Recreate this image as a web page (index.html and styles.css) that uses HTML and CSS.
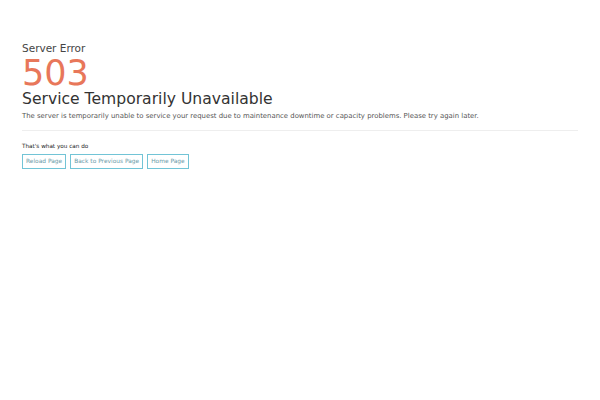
FILE: index.html
```html
<!DOCTYPE html>
<html>
<head>
<meta charset="utf-8">
<link rel="stylesheet" href="styles.css">
</head>
<body>
<div class="page">
  <div class="kicker">Server Error</div>
  <div class="code">503</div>
  <h1 class="title">Service Temporarily Unavailable</h1>
  <p class="desc">The server is temporarily unable to service your request due to maintenance downtime or capacity problems. Please try again later.</p>
  <hr class="rule">
  <div class="lead">That's what you can do</div>
  <div class="actions">
    <button class="btn">Reload Page</button>
    <button class="btn">Back to Previous Page</button>
    <button class="btn">Home Page</button>
  </div>
</div>
</body>
</html>
```
FILE: styles.css
```css
html, body { margin: 0; padding: 0; background: #fff; }
body { font-family: "DejaVu Sans", sans-serif; color: #333; }
.page { padding: 42px 22px 0 22px; }
.kicker { font-size: 10.5px; line-height: 13px; color: #444; }
.code { font-size: 35px; line-height: 34px; color: #e8775a; margin-top: 1px; }
.title { font-size: 15.6px; line-height: 18px; font-weight: normal; color: #333; margin: 0; }
.desc { font-size: 6.9px; line-height: 10px; color: #555; margin: 3px 0 0 0; }
.rule { border: 0; border-top: 1px solid #eee; margin: 9px 0 0 0; }
.lead { font-size: 5.7px; line-height: 10px; color: #222; margin-top: 10px; }
.actions { display: flex; gap: 4px; margin-top: 3px; }
.btn { font-family: "DejaVu Sans", sans-serif; font-size: 5.9px; line-height: 9px; color: #6a9aa8; background: #fff; border: 1.5px solid #72c4d6; padding: 2px 3px; margin: 0; border-radius: 0; }
```
